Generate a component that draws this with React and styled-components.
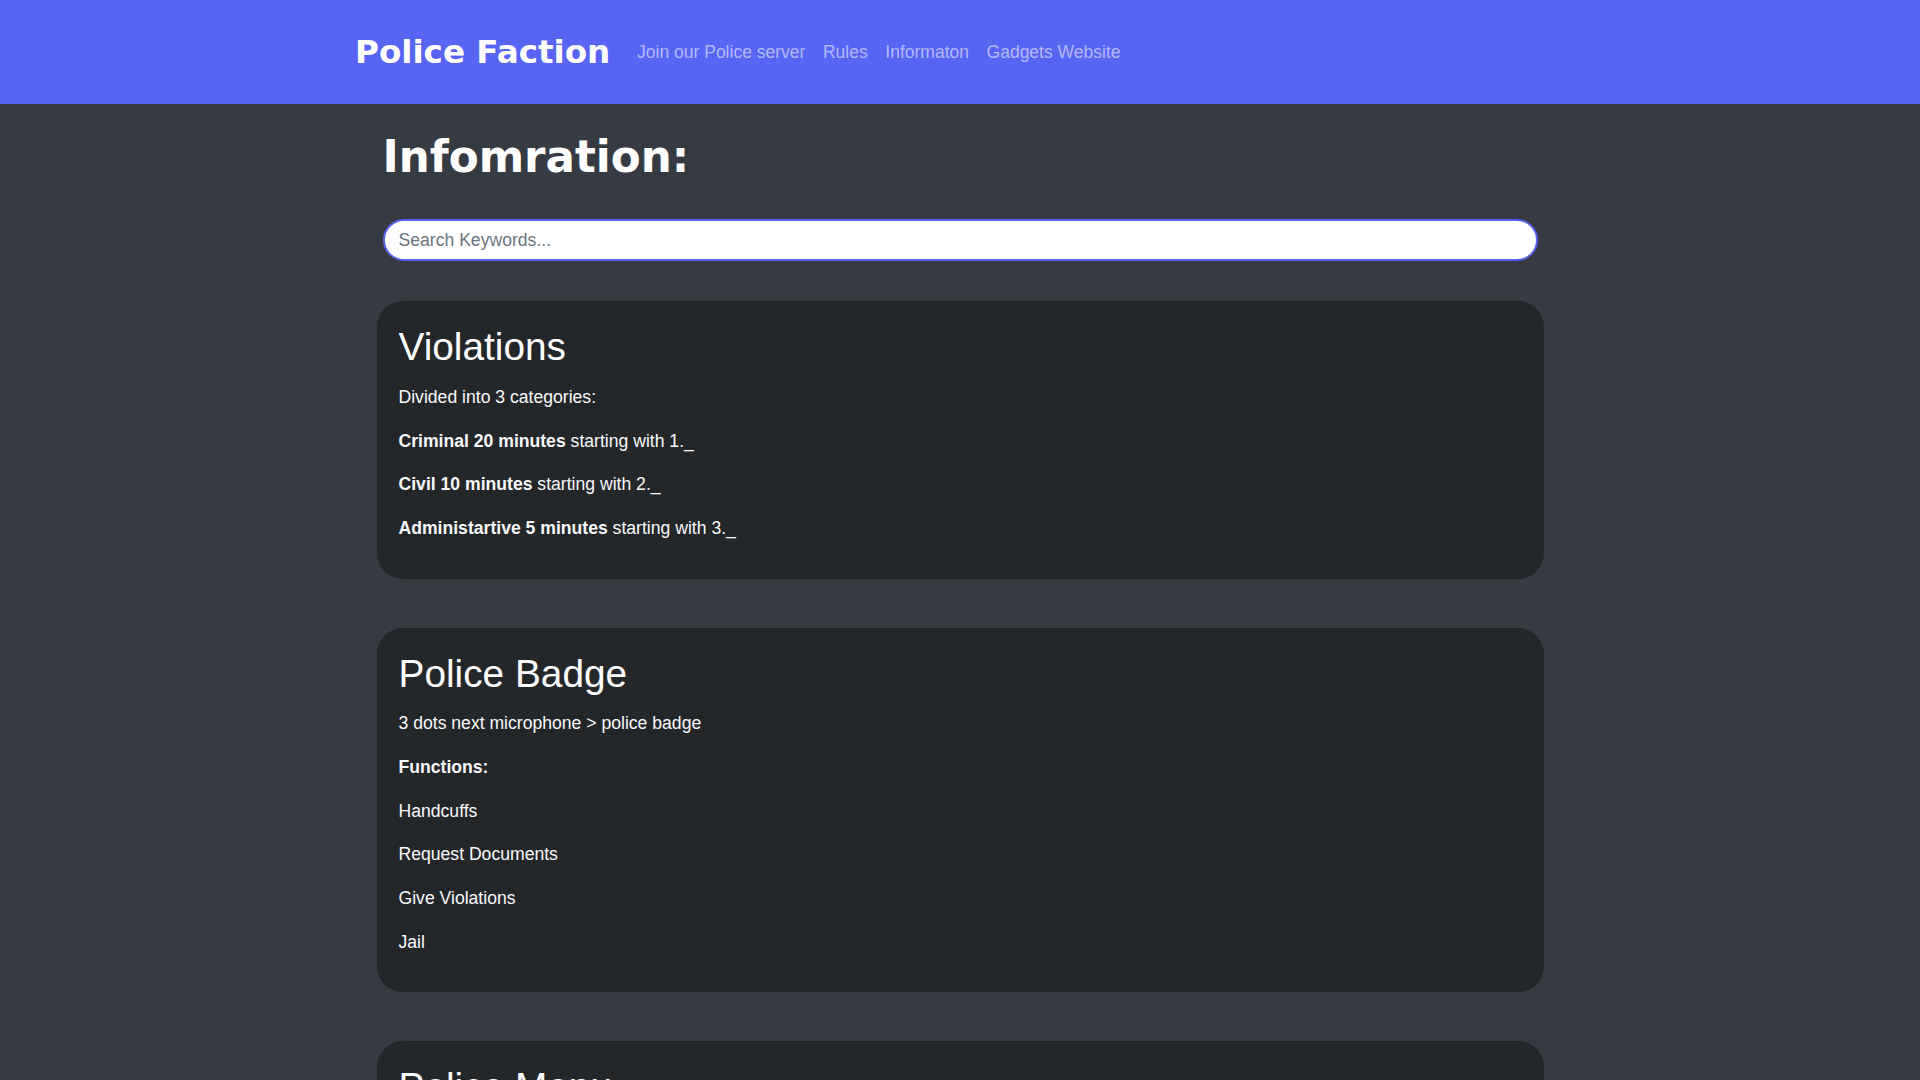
import React from 'react';
import styled, { createGlobalStyle } from 'styled-components';

const GlobalStyle = createGlobalStyle`
  html { scrollbar-width: none; }
  body {
    margin: 0;
    background: #363a42;
    color: #f8f9fa;
    font-family: "Liberation Sans", Arial, sans-serif;
    font-size: 17.6px;
    line-height: 1.5;
  }
  * { box-sizing: border-box; }
`;

const Navbar = styled.nav`
  background: #5865f2;
  height: 104px;
`;

const NavInner = styled.div`
  max-width: 1210px;
  height: 100%;
  margin: 0 auto;
  display: flex;
  align-items: center;
`;

const Brand = styled.a`
  font-family: "DejaVu Sans", sans-serif;
  font-weight: bold;
  font-size: 32.6px;
  color: #fff;
  text-decoration: none;
  margin-right: 18px;
`;

const NavLinks = styled.ul`
  display: flex;
  list-style: none;
  margin: 0;
  padding: 0;
`;

const NavLink = styled.a`
  display: block;
  padding: 8px 8.8px;
  color: rgba(255, 255, 255, 0.55);
  text-decoration: none;
  font-size: 17.5px;
`;

const Main = styled.main`
  width: 1167px;
  margin: 0 auto;
  padding-top: 27px;
`;

const PageTitle = styled.h1`
  font-family: "DejaVu Sans", sans-serif;
  font-weight: bold;
  font-size: 43.6px;
  line-height: 1.2;
  margin: 0 6px 36px;
  color: #fff;
`;

const Search = styled.input`
  display: block;
  width: calc(100% - 12px);
  margin: 0 6px 40px;
  height: 42px;
  padding: 0 14px;
  border: 2px solid #5865f2;
  border-radius: 21px;
  background: #fff;
  font-family: "Liberation Sans", Arial, sans-serif;
  font-size: 17.6px;
  color: #212529;
  outline: none;
  &::placeholder { color: #6c757d; }
`;

const Card = styled.section`
  background: #24272a;
  border-radius: 26px;
  padding: 23px 22px 20px;
  margin-bottom: 49px;
`;

const CardTitle = styled.h2`
  font-weight: normal;
  font-size: 38.8px;
  line-height: 1.2;
  margin: 0 0 13px;
  color: #fff;
`;

const Line = styled.p`
  margin: 0 0 17.3px;
`;

const sections = [
  {
    title: 'Violations',
    lines: [
      ['', 'Divided into 3 categories:'],
      ['Criminal 20 minutes', ' starting with 1._'],
      ['Civil 10 minutes', ' starting with 2._'],
      ['Administartive 5 minutes', ' starting with 3._'],
    ],
  },
  {
    title: 'Police Badge',
    lines: [
      ['', '3 dots next microphone > police badge'],
      ['Functions:', ''],
      ['', 'Handcuffs'],
      ['', 'Request Documents'],
      ['', 'Give Violations'],
      ['', 'Jail'],
    ],
  },
  {
    title: 'Police Menu',
    lines: [
      ['', '3 dots next microphone > police menu'],
      ['Functions:', ''],
    ],
  },
];

const links = ['Join our Police server', 'Rules', 'Informaton', 'Gadgets Website'];

const App = () => {
  return (
    <>
      <GlobalStyle />
      <Navbar>
        <NavInner>
          <Brand href="#">Police Faction</Brand>
          <NavLinks>
            {links.map(l => (
              <li key={l}><NavLink href="#">{l}</NavLink></li>
            ))}
          </NavLinks>
        </NavInner>
      </Navbar>
      <Main>
        <PageTitle>Infomration:</PageTitle>
        <Search placeholder="Search Keywords..." />
        {sections.map(s => (
          <Card key={s.title}>
            <CardTitle>{s.title}</CardTitle>
            {s.lines.map(([b, t], i) => (
              <Line key={i}>{b && <b>{b}</b>}{t}</Line>
            ))}
          </Card>
        ))}
      </Main>
    </>
  );
};

export default App;
